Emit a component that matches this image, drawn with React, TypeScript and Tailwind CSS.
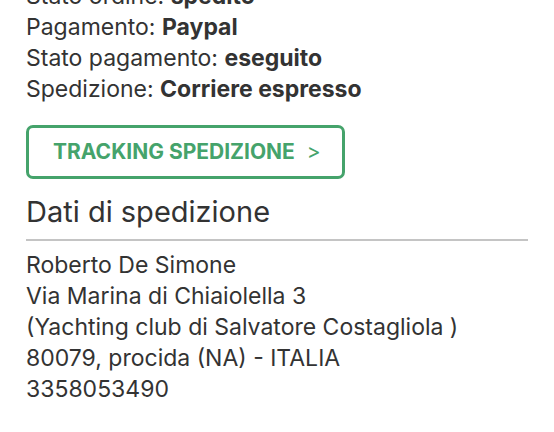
export default function App() {
  const font = { fontFamily: "Inter, 'Open Sans', sans-serif" };
  return (
    <div className="w-[554px] h-[432px] overflow-hidden bg-white text-[#333333]" style={font}>
      <div className="px-[26px]">
        <div className="mt-[-19px] text-[23px] leading-[31px]">
          <div>Stato ordine: <span className="font-bold">spedito</span></div>
          <div>Pagamento: <span className="font-bold">Paypal</span></div>
          <div>Stato pagamento: <span className="font-bold">eseguito</span></div>
          <div>Spedizione: <span className="font-bold">Corriere espresso</span></div>
        </div>
        <div className="mt-[20px]">
          <button className="inline-flex items-center h-[54px] w-[319px] pl-[24px] border-[3px] border-[#45a36b] rounded-[7px] text-[#45a36b] font-bold text-[21px] tracking-[0px]">
            TRACKING SPEDIZIONE <span className="ml-[12px] font-normal">&gt;</span>
          </button>
        </div>
        <div className="mt-[15px] text-[29px] leading-[36px] pb-[9px] border-b-2 border-[#c4c4c4]">Dati di spedizione</div>
        <div className="mt-[9px] text-[23px] leading-[31px]">
          <div>Roberto De Simone</div>
          <div>Via Marina di Chiaiolella 3</div>
          <div>(Yachting club di Salvatore Costagliola )</div>
          <div>80079, procida (NA) - ITALIA</div>
          <div>3358053490</div>
        </div>
      </div>
    </div>
  );
}
